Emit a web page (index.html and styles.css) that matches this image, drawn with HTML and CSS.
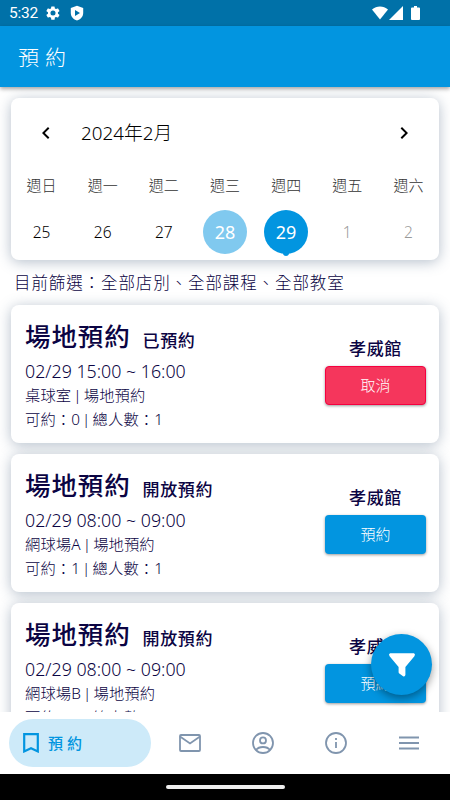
FILE: index.html
```
<!DOCTYPE html>
<html lang="zh-Hant">
<head>
<meta charset="utf-8">
<title>預約</title>
<link rel="stylesheet" href="styles.css">
</head>
<body>
<div class="status">
  <span class="time">5:32</span>
  <svg class="gear" width="16" height="16" viewBox="0 0 24 24"><path d="M19.4 13a7.500 7.500 0 0 0 0-2l2.100-1.600a.5.5 0 0 0 .1-.6l-2-3.500a.5.5 0 0 0-.6-.2l-2.500 1a7.300 7.300 0 0 0-1.700-1l-.4-2.600a.5.500 0 0 0-.5-.4h-4a.5.500 0 0 0-.5.4L9 5.100a7.300 7.300 0 0 0-1.700 1l-2.500-1a.5.500 0 0 0-.6.2l-2 3.500a.5.500 0 0 0 .1.600L4.500 11a7.500 7.500 0 0 0 0 2l-2.200 1.600a.5.500 0 0 0-.1.600l2 3.500c.1.200.4.300.6.200l2.500-1c.5.400 1.100.8 1.700 1l.4 2.700c0 .2.200.4.500.4h4c.3 0 .5-.2.5-.4l.4-2.700a7.300 7.300 0 0 0 1.700-1l2.500 1c.2.100.5 0 .6-.2l2-3.500a.5.500 0 0 0-.1-.6zM12 15.800a3.800 3.800 0 1 1 0-7.600 3.800 3.800 0 0 1 0 7.600z"/></svg>
  <svg class="shield" width="14" height="16" viewBox="0 0 14 16"><path fill-rule="evenodd" d="M7 .8 L13.200 3 V8 C13.200 11.800 10.400 14.500 7 15.600 C3.600 14.500 .8 11.800 .8 8 V3 Z M5 5 V11 L10 8 Z"/></svg>
  <svg class="wifi" width="16" height="14" viewBox="0 0 16 14"><path d="M0 3.400C4.600-.5 11.400-.5 16 3.400L8 13.500z"/></svg>
  <svg class="signal" width="14" height="14" viewBox="0 0 14 14"><path d="M14 0V14H0z"/></svg>
  <svg class="battery" width="9" height="14" viewBox="0 0 9 14"><path d="M3 0h3v1.400h2q1 0 1 1V13q0 1-1 1H1q-1 0-1-1V2.400q0-1 1-1h2z"/></svg>
</div>
<div class="appbar">預約</div>

<div class="content">
  <div class="card calendar">
    <div class="month">
      <svg width="24" height="24" viewBox="0 0 24 24"><path d="M15.400 7.400 14 6l-6 6 6 6 1.400-1.400L10.800 12z"/></svg>
      <span class="month-name">2024年2月</span>
      <svg width="24" height="24" viewBox="0 0 24 24"><path d="M10 6 8.600 7.400l4.600 4.600-4.600 4.600L10 18l6-6z"/></svg>
    </div>
    <div class="week names">
      <span>週日</span><span>週一</span><span>週二</span><span>週三</span><span>週四</span><span>週五</span><span>週六</span>
    </div>
    <div class="week days">
      <span>25</span><span>26</span><span>27</span>
      <span class="circle today">28</span>
      <span class="circle selected">29</span>
      <span class="next">1</span><span class="next">2</span>
    </div>
  </div>

  <div class="filter">目前篩選：全部店別、全部課程、全部教室</div>

  <div class="card booking">
    <div class="info">
      <div class="head"><span class="title">場地預約</span><span class="state">已預約</span></div>
      <div class="date">02/29 15:00 ~ 16:00</div>
      <div class="meta">桌球室 | 場地預約</div>
      <div class="meta">可約：0 | 總人數：1</div>
    </div>
    <div class="action">
      <div class="place">孝威館</div>
      <div class="button cancel">取消</div>
    </div>
  </div>

  <div class="card booking">
    <div class="info">
      <div class="head"><span class="title">場地預約</span><span class="state">開放預約</span></div>
      <div class="date">02/29 08:00 ~ 09:00</div>
      <div class="meta">網球場A | 場地預約</div>
      <div class="meta">可約：1 | 總人數：1</div>
    </div>
    <div class="action">
      <div class="place">孝威館</div>
      <div class="button">預約</div>
    </div>
  </div>

  <div class="card booking">
    <div class="info">
      <div class="head"><span class="title">場地預約</span><span class="state">開放預約</span></div>
      <div class="date">02/29 08:00 ~ 09:00</div>
      <div class="meta">網球場B | 場地預約</div>
      <div class="meta">可約：1 | 總人數：1</div>
    </div>
    <div class="action">
      <div class="place">孝威館</div>
      <div class="button">預約</div>
    </div>
  </div>
</div>

<div class="fab">
  <svg width="28" height="26" viewBox="0 0 28 26"><path d="M2 1.200h24q1.800 1 .4 3L17.400 15v8q-.5 2-2.300 1.200L11.300 21.500q-.7-.6-.7-1.600V15L1.600 4.200q-1.400-2 .4-3z"/></svg>
</div>

<div class="nav">
  <div class="tab active">
    <svg width="16" height="20" viewBox="0 0 16 20"><path d="M1.200 1.200h13.600v17.200L8 15.200l-6.800 3.200z"/></svg>
    <span>預約</span>
  </div>
  <div class="tab"><svg width="22" height="18" viewBox="0 0 22 18"><rect x="1" y="1" width="20" height="16" rx="1"/><path d="M1 2.500l10 7 10-7"/></svg></div>
  <div class="tab"><svg width="22" height="22" viewBox="0 0 22 22"><circle cx="11" cy="11" r="10"/><circle cx="11" cy="8.400" r="3"/><path d="M4 18c3-4 11-4 14 0"/></svg></div>
  <div class="tab"><svg width="22" height="22" viewBox="0 0 22 22"><circle cx="11" cy="11" r="10"/><path d="M11 10v6M11 6v2"/></svg></div>
  <div class="tab"><svg width="20" height="14" viewBox="0 0 20 14"><path d="M0 1.500h20M0 7h20M0 12.500h20"/></svg></div>
</div>
<div class="gesture"><div class="pill"></div></div>
</body>
</html>
```
FILE: styles.css
```
* { box-sizing: border-box; }
body {
  margin: 0; width: 450px; height: 800px; overflow: hidden;
  display: flex; flex-direction: column; position: relative;
  background: #fff; color: #0b0443;
  font-family: "Noto Sans", "Noto Sans CJK TC", sans-serif;
  font-weight: 300; white-space: nowrap;
}
svg { display: block; flex: none; }

.status {
  height: 26px; flex: none; padding: 0 30px 0 9px;
  display: flex; align-items: center;
  background: #0071a8; color: #fff; fill: #fff;
}
.time { width: 36px; font: 400 15.500px/28px Roboto, sans-serif; letter-spacing: -.2px; }
.shield { margin-left: 9px; }
.wifi { margin-left: auto; }
.signal { margin-left: 1px; }
.battery { margin-left: 8px; }

.appbar {
  height: 61px; flex: none; padding-left: 18px; z-index: 1;
  background: #0295e0; color: #fff;
  font-size: 21px; line-height: 62px; letter-spacing: 6px;
  box-shadow: 0 2px 4px rgba(0, 0, 0, .35);
}

.content { flex: 1; min-height: 0; overflow: hidden; padding: 11px 11px 0; }
.card {
  background: #fff; border-radius: 8px;
  box-shadow: 0 2px 14px rgba(70, 95, 125, .4);
}

.calendar { height: 162px; padding-top: 18px; color: #000; }
.month { display: flex; align-items: center; height: 34px; padding: 0 23px; }
.month-name { flex: 1; margin-left: 23px; font-size: 18.800px; line-height: 32px; }
.week { display: grid; grid-template-columns: repeat(7, 1fr); justify-items: center; align-items: center; }
.names { height: 22px; margin-top: 23px; font-size: 15px; color: #333; }
.days { height: 44px; margin-top: 15px; font-size: 15.500px; }
.circle {
  width: 44px; height: 44px; border-radius: 50%;
  font-size: 18px; font-weight: 400; line-height: 44px; text-align: center; color: #fff;
}
.today { background: #80c9ef; }
.selected { background: #0295e0; position: relative; }
.selected::after {
  content: ""; position: absolute; left: 19px; bottom: -2px;
  width: 6px; height: 6px; border-radius: 50%; background: #0295e0;
}
.next { color: #999; }

.filter { height: 45px; padding-left: 3px; font-size: 16.500px; line-height: 46px; letter-spacing: .9px; }

.booking { height: 138px; margin-bottom: 10.800px; padding: 11px 13px 0 14px; display: flex; justify-content: space-between; }
.head { height: 42px; display: flex; align-items: flex-start; }
.title { font-size: 25.500px; font-weight: 500; letter-spacing: .9px; line-height: 40px; }
.state { margin-left: 12px; font-size: 17px; font-weight: 500; letter-spacing: .6px; line-height: 50px; }
.date { font-size: 17.800px; line-height: 26px; }
.meta { font-size: 15.300px; line-height: 24.300px; letter-spacing: .1px; word-spacing: -2px; margin-top: -1px; }
.meta + .meta { margin-top: 0; }
.action { width: 101px; padding-top: 20px; text-align: center; }
.place { font-size: 17px; font-weight: 500; line-height: 26px; letter-spacing: .6px; }
.button {
  height: 39px; margin-top: 4px; border-radius: 4px;
  background: #0295e0; color: #fff; font-size: 15px; line-height: 39px;
  box-shadow: 0 1px 3px rgba(0, 0, 0, .4);
}
.cancel { background: #f5365c; border: 1px solid #f5003f; line-height: 37px; }

/* floats over the list */
.fab {
  position: absolute; left: 371px; top: 634px; z-index: 2;
  width: 61px; height: 61px; border-radius: 50%;
  display: flex; align-items: center; justify-content: center;
  background: #0295e0; fill: #fff;
  box-shadow: 0 3px 8px rgba(0, 0, 0, .4);
}

.nav {
  height: 62px; flex: none; padding: 0 5px 0 9px; z-index: 1;
  display: flex; align-items: center; background: #fff;
}
.tab { width: 72.900px; display: flex; justify-content: center; fill: none; stroke: #8095ae; stroke-width: 1.800; }
.active {
  width: 142px; height: 48px; margin-right: 3px; border-radius: 24px;
  padding-left: 14px; justify-content: flex-start; align-items: center;
  background: #cdeaf9; color: #0295e0; stroke: #0295e0;
}
.active svg { stroke-width: 2.200; }
.active span { margin-left: 9px; margin-top: -2px; font-size: 15px; font-weight: 500; letter-spacing: 4px; }

.gesture { height: 26px; flex: none; background: #000; display: flex; justify-content: center; }
.pill { width: 119px; height: 4px; margin-top: 11px; border-radius: 2px; background: #eee; }
```
